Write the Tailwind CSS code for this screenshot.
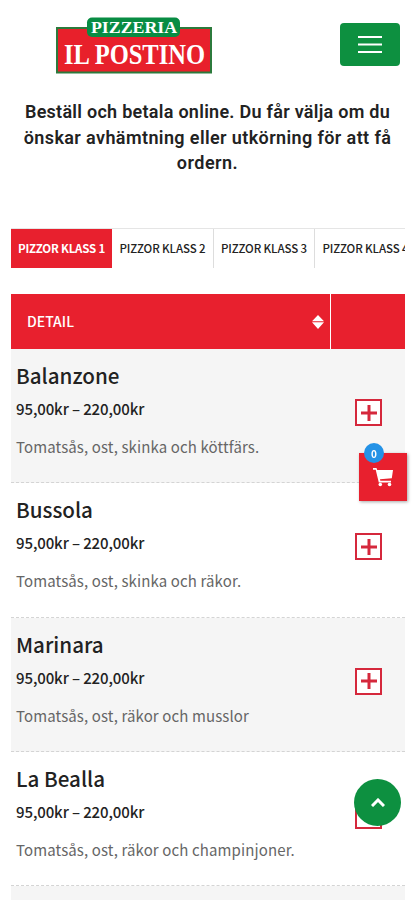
<!DOCTYPE html>
<html lang="sv">

<head>
    <meta charset="UTF-8">
    <meta name="viewport" content="width=device-width, initial-scale=1.0">
    <title>Pizzeria Il Postino</title>
    <script src="https://cdn.jsdelivr.net/npm/@tailwindcss/browser@4"></script>
</head>

<body class="h-[900px] overflow-hidden bg-white font-['Noto_Sans_CJK_SC',sans-serif] text-[#222]">

    <header class="flex h-[99px] items-start justify-between pl-14 pr-[15px] pt-[17px]">
        <a href="#" aria-label="Pizzeria Il Postino">
            <svg class="h-[58px] w-[156px]" viewBox="0 0 156 58">
                <rect x="1" y="11" width="154" height="44.500" fill="#e8202b" stroke="#2c7a3c" stroke-width="2" />
                <rect x="31" y=".5" width="93" height="19.500" rx="5" fill="#088c43" />
                <text x="35" y="15.500" textLength="86" lengthAdjust="spacingAndGlyphs" font-family="Liberation Serif, serif" font-weight="700" font-size="16" fill="#fff">PIZZERIA</text>
                <text x="8" y="47" textLength="141" lengthAdjust="spacingAndGlyphs" font-family="Liberation Serif, serif" font-weight="700" font-size="30" fill="#fff">IL POSTINO</text>
            </svg>
        </a>
        <button class="mt-[6px] flex h-[43px] w-[60px] items-center justify-center rounded-[4px] bg-[#0d9040]" aria-label="Meny">
            <svg class="h-5 w-6" viewBox="0 0 24 20" stroke="#fff" stroke-width="1.800">
                <path d="M0 2h24M0 9.500h24M0 17h24" />
            </svg>
        </button>
    </header>

    <h2 class="h-[129px] text-center font-['Roboto',sans-serif] text-[18px] leading-[25.500px] font-semibold">
        <span class="block whitespace-nowrap tracking-[0.270px]">Beställ och betala online. Du får välja om du</span>
        <span class="block whitespace-nowrap tracking-[0.390px]">önskar avhämtning eller utkörning för att få</span>
        <span class="block tracking-[0.500px]">ordern.</span>
    </h2>

    <main class="ml-[11px] w-[394px]">
        <ul class="flex h-10 overflow-hidden border-t border-[#e5e5e5] text-[11.5px] font-medium tracking-[-0.100px] whitespace-nowrap">
            <li class="flex w-[101px] shrink-0 items-center justify-center bg-[#e8202e] font-bold tracking-[-0.200px] text-white">PIZZOR KLASS 1</li>
            <li class="flex w-[102px] shrink-0 items-center justify-center border-r border-[#ddd]">PIZZOR KLASS 2</li>
            <li class="flex w-[101px] shrink-0 items-center justify-center border-r border-[#ddd]">PIZZOR KLASS 3</li>
            <li class="flex w-[101px] shrink-0 items-center justify-center">PIZZOR KLASS 4</li>
        </ul>

        <section class="mt-[26px]">
            <div class="flex h-[55px] bg-[#e8202e] text-white">
                <div class="flex w-[320px] items-center justify-between border-r border-white pl-4 pr-[6px] text-[14px] font-medium">
                    <span>DETAIL</span>
                    <svg class="h-[14px] w-3" viewBox="0 0 12 14" fill="#fff">
                        <path d="M6 0l6 6.300H0zM6 14l6-6.700H0z" />
                    </svg>
                </div>
            </div>
            <div id="meny"></div>
        </section>
    </main>

    <a href="#" class="fixed left-[359px] top-[453px] flex h-12 w-12 items-center justify-center bg-[#e8202e] shadow-[1px_1px_3px_rgba(0,0,0,0.35)]" aria-label="Varukorg">
        <svg class="h-5 w-5" viewBox="0 0 20 20" fill="#fff">
            <path d="M0 1h3.500l.7 2H20l-1.200 8.300-11.800 1 .3 1.400H18V15.500H5.800L2.700 2.700H0z" />
            <circle cx="7.300" cy="17.500" r="1.800" />
            <circle cx="16.500" cy="17.500" r="1.800" />
        </svg>
        <span class="absolute -top-[10px] left-[5px] flex size-5 items-center justify-center rounded-full bg-[#2492e6] text-[10px] font-bold text-white">0</span>
    </a>

    <a href="#" class="fixed left-[354px] top-[779px] flex size-[47px] items-center justify-center rounded-full bg-[#0d9040]" aria-label="Till toppen">
        <svg class="h-[9px] w-[14px]" viewBox="0 0 14 9" fill="none" stroke="#fff" stroke-width="3">
            <path d="M1 8l6-6 6 6" />
        </svg>
    </a>

</body>

<script>

    const ratter = [
        { namn: 'Balanzone', detalj: 'Tomatsås, ost, skinka och köttfärs.' },
        { namn: 'Bussola', detalj: 'Tomatsås, ost, skinka och räkor.' },
        { namn: 'Marinara', detalj: 'Tomatsås, ost, räkor och musslor' },
        { namn: 'La Bealla', detalj: 'Tomatsås, ost, räkor och champinjoner.' },
        { namn: '', detalj: '' },
    ];

    // sista raden är tom, bara dess överkant syns
    document.getElementById('meny').innerHTML = ratter.map((ratt) => ratt.namn ? `
        <div class="flex h-[134.250px] border-b border-dashed border-[#d4d4d4] odd:bg-[#f5f5f5]">
            <div class="w-[344px] pl-[5px] pt-[11px]">
                <h3 class="text-[20.600px] leading-[30px] font-medium">${ratt.namn}</h3>
                <p class="mt-[7px] text-[15px] leading-6 font-medium tracking-[-0.110px]">95,00kr – 220,00kr</p>
                <p class="mt-[14px] text-[15px] leading-6 tracking-[0.120px] text-[#666]">${ratt.detalj}</p>
            </div>
            <button class="mt-[50px] flex size-[27px] items-center justify-center border-2 border-[#d5283c] bg-white">
                <svg class="size-4" viewBox="0 0 16 16" stroke="#d5283c" stroke-width="3"><path d="M8 0v16M0 8h16" /></svg>
            </button>
        </div>` : '<div class="h-[14px] bg-[#f5f5f5]"></div>').join('');

</script>

</html>
